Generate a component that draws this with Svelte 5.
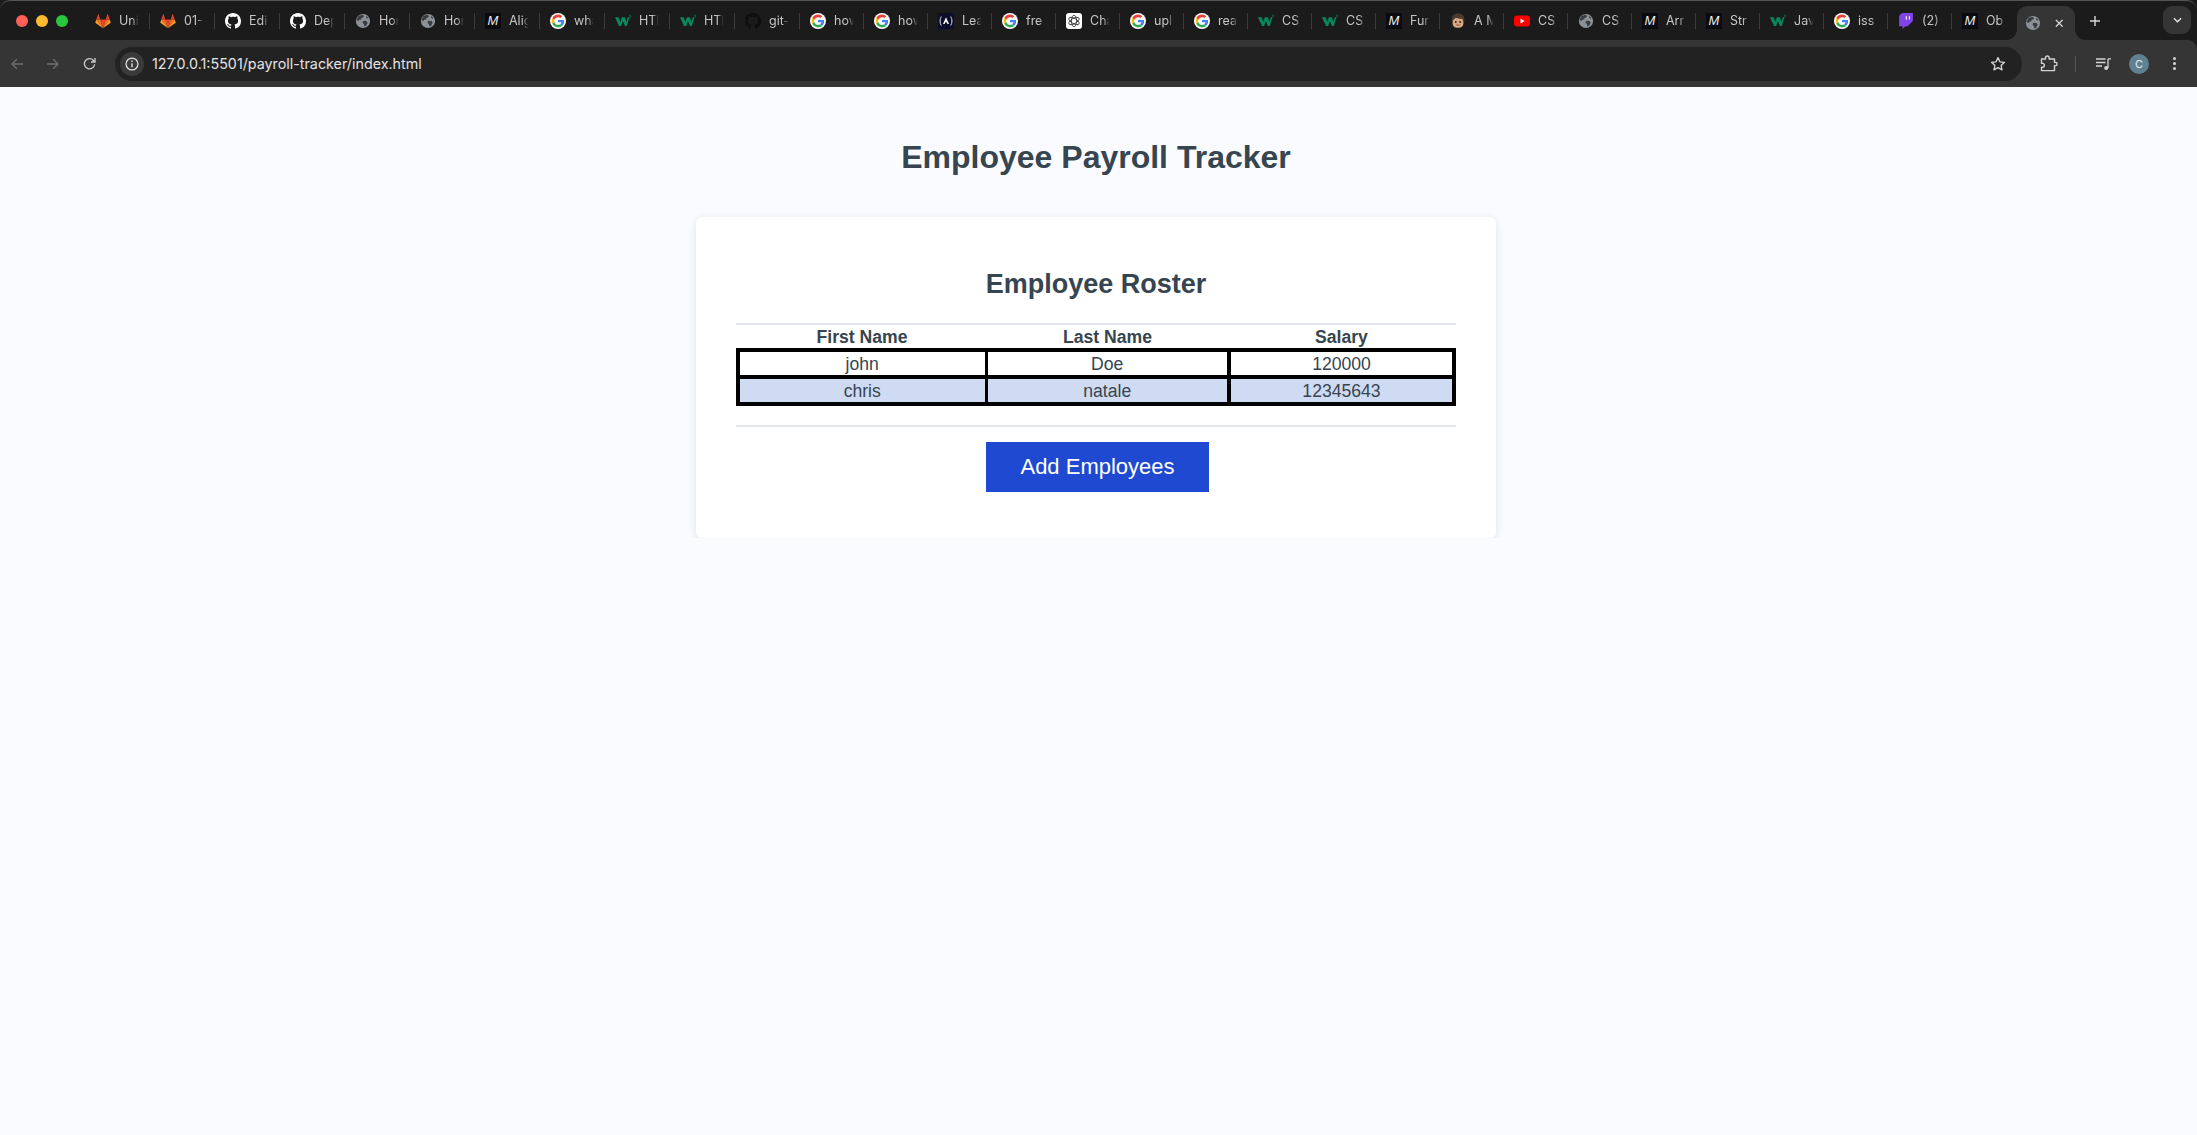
<script lang="ts">
  type Tab = { icon: string; label: string };

  // Titles as far as the narrow tabs show them
  const tabs: Tab[] = [
    { icon: 'gitlab', label: 'Uni' },
    { icon: 'gitlab', label: '01-' },
    { icon: 'github', label: 'Edi' },
    { icon: 'github', label: 'Dep' },
    { icon: 'globe', label: 'Hor' },
    { icon: 'globe', label: 'Hor' },
    { icon: 'mdn', label: 'Alig' },
    { icon: 'google', label: 'wha' },
    { icon: 'w3', label: 'HTI' },
    { icon: 'w3', label: 'HTI' },
    { icon: 'github-dark', label: 'git-' },
    { icon: 'google', label: 'how' },
    { icon: 'google', label: 'how' },
    { icon: 'learn', label: 'Lea' },
    { icon: 'google', label: 'fre' },
    { icon: 'openai', label: 'Cha' },
    { icon: 'google', label: 'upl' },
    { icon: 'google', label: 'rea' },
    { icon: 'w3', label: 'CS' },
    { icon: 'w3', label: 'CS' },
    { icon: 'mdn', label: 'Fur' },
    { icon: 'avatar', label: 'A M' },
    { icon: 'youtube', label: 'CS' },
    { icon: 'globe', label: 'CS' },
    { icon: 'mdn', label: 'Arr' },
    { icon: 'mdn', label: 'Str' },
    { icon: 'w3', label: 'Jav' },
    { icon: 'google', label: 'iss' },
    { icon: 'twitch', label: '(2)' },
    { icon: 'mdn', label: 'Ob' }
  ];

  const employees = [
    { first: 'john', last: 'Doe', salary: 120000 },
    { first: 'chris', last: 'natale', salary: 12345643 }
  ];

  const octocat =
    'M8 0C3.58 0 0 3.58 0 8c0 3.54 2.29 6.53 5.47 7.59.4.07.55-.17.55-.38 0-.19-.01-.82-.01-1.49-2.01.37-2.53-.49-2.69-.94-.09-.23-.48-.94-.82-1.13-.28-.15-.68-.52-.01-.53.63-.01 1.08.58 1.23.82.72 1.21 1.87.87 2.33.66.07-.52.28-.87.51-1.07-1.78-.2-3.64-.89-3.64-3.95 0-.87.31-1.59.82-2.15-.08-.2-.36-1.02.08-2.12 0 0 .67-.21 2.2.82.64-.18 1.32-.27 2-.27.68 0 1.36.09 2 .27 1.53-1.04 2.2-.82 2.2-.82.44 1.1.16 1.92.08 2.12.51.56.82 1.27.82 2.15 0 3.07-1.87 3.75-3.65 3.95.29.25.54.73.54 1.48 0 1.07-.01 1.93-.01 2.2 0 .21.15.46.55.38A8.013 8.013 0 0016 8c0-4.42-3.58-8-8-8z';
</script>

{#snippet favicon(icon: string)}
  {#if icon === 'gitlab'}
    <svg class="fav" viewBox="0 0 16 16">
      <path d="M8 15.2 5.2 6.5h5.6z" fill="#e24329" />
      <path d="M8 15.2 5.2 6.5H1.3z" fill="#fc6d26" />
      <path d="M8 15.2l2.8-8.7h3.9z" fill="#fc6d26" />
      <path d="M1.3 6.5.4 9.2c-.1.3 0 .6.3.8L8 15.2z" fill="#fca326" />
      <path d="M14.7 6.5l.9 2.7c.1.3 0 .6-.3.8L8 15.2z" fill="#fca326" />
      <path d="M1.3 6.5h3.9L3.6 1.2c-.1-.3-.4-.3-.5 0z" fill="#e24329" />
      <path d="M14.7 6.5h-3.9l1.6-5.3c.1-.3.4-.3.5 0z" fill="#e24329" />
    </svg>
  {:else if icon === 'github'}
    <svg class="fav" viewBox="0 0 16 16"><path d={octocat} fill="#fff" /></svg>
  {:else if icon === 'github-dark'}
    <svg class="fav" viewBox="0 0 16 16"><path d={octocat} fill="#0e0e0e" /></svg>
  {:else if icon === 'globe'}
    <svg class="fav" viewBox="-1 -1 18 18">
      <circle cx="8" cy="8" r="8" fill="#8b9197" />
      <path d="M3 2.5 7.2.9l1.9 1.4-.9 1.7-1.9.5-.4 1.9-2.2.3-.9 1.7L.7 6.5zM8.4 7.6l3.6.4 1.2 1.9-1.5 3.1-2 1.3-.8-3-1.5-1.7zM12 2.4l2.3 2.4-1.9.5-1-1.4z" fill="#3a3d40" />
    </svg>
  {:else if icon === 'mdn'}
    <span class="fav mdn">M</span>
  {:else if icon === 'google'}
    <svg class="fav" viewBox="-6 -6 60 60">
      <circle cx="24" cy="24" r="30" fill="#fff" />
      <path fill="#EA4335" d="M24 9.5c3.54 0 6.71 1.22 9.21 3.6l6.85-6.85C35.9 2.38 30.47 0 24 0 14.62 0 6.51 5.38 2.56 13.22l7.98 6.19C12.43 13.72 17.74 9.5 24 9.5z" />
      <path fill="#4285F4" d="M46.98 24.55c0-1.57-.15-3.09-.38-4.55H24v9.02h12.94c-.58 2.96-2.26 5.48-4.78 7.18l7.73 6c4.51-4.18 7.09-10.36 7.09-17.65z" />
      <path fill="#FBBC05" d="M10.53 28.59c-.48-1.45-.76-2.99-.76-4.59s.27-3.14.76-4.59l-7.98-6.19C.92 16.46 0 20.12 0 24c0 3.88.92 7.54 2.56 10.78l7.97-6.19z" />
      <path fill="#34A853" d="M24 48c6.48 0 11.93-2.13 15.89-5.81l-7.73-6c-2.15 1.45-4.92 2.3-8.16 2.3-6.26 0-11.57-4.22-13.47-9.91l-7.98 6.19C6.51 42.62 14.62 48 24 48z" />
    </svg>
  {:else if icon === 'w3'}
    <svg class="fav" viewBox="0 0 16 16">
      <path d="M0 4.2h3.6l1.7 4.9 1.6-4.9h3l1.5 4.9 1.3-4.9h1.6l-2.4 8.8h-1.9L7.9 8l-1.7 5H4z" fill="#06895c" />
      <path d="M14 2.2h1.6l-.7.9c.6.1.8.5.7.9-.1.5-.9.7-1.6.4" fill="none" stroke="#06895c" stroke-width=".6" />
    </svg>
  {:else if icon === 'learn'}
    <svg class="fav learn" viewBox="0 0 16 16">
      <path d="M8 4.2 11 11H9.5L8 8.6 6.5 11H5z" fill="#fff" />
      <path d="M3.3 3.5C1.6 6 1.6 10 3.3 12.5M12.7 3.5c1.7 2.5 1.7 6.5 0 9" fill="none" stroke="#d6d8e6" />
    </svg>
  {:else if icon === 'openai'}
    <svg class="fav openai" viewBox="0 0 16 16">
      <g fill="none" stroke="#2b2b2b" stroke-width=".8">
        <ellipse cx="8" cy="8" rx="2.6" ry="5.8" />
        <ellipse cx="8" cy="8" rx="2.6" ry="5.8" transform="rotate(60 8 8)" />
        <ellipse cx="8" cy="8" rx="2.6" ry="5.8" transform="rotate(120 8 8)" />
      </g>
    </svg>
  {:else if icon === 'avatar'}
    <svg class="fav" viewBox="0 0 16 16">
      <path d="M1.8 8C1 3 4 .5 8 .5S15 3 14.2 8z" fill="#4b3a30" />
      <rect x="2.6" y="4.8" width="10.8" height="10" rx="4.4" fill="#d9a77f" />
      <path d="M2.6 7C4 6.6 5 5.6 5.6 4.4c2 1 5 1.4 7.8 1.2V3H2.6z" fill="#4b3a30" />
      <circle cx="5.8" cy="9" r=".9" fill="#2d211b" />
      <circle cx="10.2" cy="9" r=".9" fill="#2d211b" />
      <rect x="6.2" y="11.6" width="3.6" height="1" rx=".5" fill="#8f4f3d" />
    </svg>
  {:else if icon === 'youtube'}
    <svg class="fav" viewBox="0 0 16 16">
      <rect y="2.5" width="16" height="11" rx="3" fill="#f00" />
      <path d="M6.5 5.6v4.8L10.6 8z" fill="#fff" />
    </svg>
  {:else if icon === 'twitch'}
    <svg class="fav" viewBox="0 0 24 24">
      <path d="M6 0 1.7 4.3v15.4h5.1V24l4.3-4.3h3.4L22.3 12V0z" fill="#8045e6" />
      <path d="M11.6 4.7h1.7v5.2h-1.7zM16.3 4.7H18v5.2h-1.7z" fill="#fff" />
    </svg>
  {/if}
{/snippet}

<div class="browser">
  <header class="tabbar">
    <div class="lights">
      <span class="light red"></span>
      <span class="light amber"></span>
      <span class="light green"></span>
    </div>
    <div class="tabs">
      {#each tabs as tab, i}
        <div class="tab" class:last={i === tabs.length - 1}>
          {@render favicon(tab.icon)}
          <span class="tab-title">{tab.label}</span>
        </div>
      {/each}
      <div class="tab-active">
        {@render favicon('globe')}
        <svg class="tab-close" viewBox="0 0 10 10"><path d="M1 1l8 8M9 1l-8 8" stroke="#e2e2e2" stroke-width="1.5" /></svg>
      </div>
      <svg class="new-tab" viewBox="0 0 10 10"><path d="M5 0v10M0 5h10" stroke="#d8d8d8" stroke-width="1.4" /></svg>
    </div>
    <div class="tab-search">
      <svg viewBox="0 0 10 6"><path d="M1 1l4 4 4-4" fill="none" stroke="#e6e6e6" stroke-width="1.5" /></svg>
    </div>
  </header>

  <div class="toolbar">
    <svg class="nav" viewBox="0 0 12 12"><path d="M12 6H1M5.8 1.2 1 6l4.8 4.8" fill="none" stroke="#6f6f6f" stroke-width="1.3" /></svg>
    <svg class="nav forward" viewBox="0 0 12 12"><path d="M0 6h11M6.2 1.2 11 6l-4.8 4.8" fill="none" stroke="#6f6f6f" stroke-width="1.3" /></svg>
    <svg class="nav reload" viewBox="0 0 13 13"><path d="M11.6 7.2A5.1 5.1 0 1 1 10 3L11.6 4.6" fill="none" stroke="#cfcfcf" stroke-width="1.3" /><path d="M12 1v4h-4" fill="none" stroke="#cfcfcf" stroke-width="1.3" /></svg>

    <div class="omnibox">
      <span class="site-info">
        <svg viewBox="0 0 14 14"><circle cx="7" cy="7" r="5.9" fill="none" stroke="#e0e0e0" stroke-width="1.3" /><path d="M7 6.2v4M7 3.6v1.4" stroke="#e0e0e0" stroke-width="1.4" /></svg>
      </span>
      <span class="url">127.0.0.1:5501/payroll-tracker/index.html</span>
      <svg class="star" viewBox="0 0 16 16"><path d="M8 1.6l1.9 4.2 4.6.5-3.4 3.1.9 4.5L8 11.6l-4 2.3.9-4.5-3.4-3.1 4.6-.5z" fill="none" stroke="#d8d8d8" stroke-width="1.3" stroke-linejoin="round" /></svg>
    </div>

    <svg class="puzzle" viewBox="0 0 18 17"><path d="M1.5 4h4V2.8a1.8 1.8 0 0 1 3.6 0V4h5.4v3.4h1a1.6 1.6 0 0 1 0 3.2h-1v5H1.5v-3.4h1a1.9 1.9 0 0 0 0-3.8h-1z" fill="none" stroke="#d4d4d4" stroke-width="1.4" stroke-linejoin="round" /></svg>
    <span class="tool-sep"></span>
    <svg class="media" viewBox="0 0 15 12"><path d="M0 1h9.5M0 4.5h9.5M0 8h6" stroke="#d4d4d4" stroke-width="1.3" /><path d="M12 1v9M12 .8h3" stroke="#d4d4d4" stroke-width="1.3" /><circle cx="10.2" cy="10" r="2" fill="#d4d4d4" /></svg>
    <span class="profile">C</span>
    <span class="kebab"><i></i><i></i><i></i></span>
  </div>
</div>

<main class="page">
  <h1>Employee Payroll Tracker</h1>
  <section class="card">
    <h2>Employee Roster</h2>
    <hr />
    <table>
      <colgroup>
        <col class="col-first" />
        <col class="col-last" />
        <col />
      </colgroup>
      <thead>
        <tr>
          <th>First Name</th>
          <th>Last Name</th>
          <th>Salary</th>
        </tr>
      </thead>
      <tbody>
        {#each employees as person}
          <tr>
            <td>{person.first}</td>
            <td>{person.last}</td>
            <td>{person.salary}</td>
          </tr>
        {/each}
      </tbody>
    </table>
    <hr class="below" />
    <div class="actions">
      <button type="button">Add Employees</button>
    </div>
  </section>
</main>

<style>
  :global(body) {
    margin: 0;
    background: #f9fbff;
    font-family: 'Liberation Sans', Arial, sans-serif;
  }

  .browser {
    height: 87px;
    background: #1b1b1b;
    font-family: Inter, 'Liberation Sans', sans-serif;
  }

  .tabbar {
    display: flex;
    align-items: stretch;
    height: 39px;
    background: #1b1b1b;
    border-top: 1px solid #555;
    border-radius: 10px 10px 0 0;
  }

  .lights {
    display: flex;
    align-items: center;
    gap: 8px;
    width: 84.5px;
    padding-left: 16px;
    box-sizing: border-box;
    flex: none;
  }

  .light {
    width: 12px;
    height: 12px;
    border-radius: 50%;
  }
  .red { background: #fe5f57; }
  .amber { background: #febb2e; }
  .green { background: #28c840; }

  .tabs {
    display: flex;
    align-items: center;
    flex: 1;
    min-width: 0;
  }

  .tab {
    display: flex;
    align-items: center;
    gap: 8px;
    width: 64px;
    height: 16px;
    padding-left: 10.5px;
    box-sizing: border-box;
    flex: none;
    border-right: 1px solid #3c3c3c;
  }
  /* the first tabs come out a pixel wider */
  .tab:nth-child(-n + 11) { width: 65px; }
  .tab.last { border-right-color: transparent; }

  .fav {
    display: block;
    width: 16px;
    height: 16px;
    flex: none;
  }

  .mdn {
    background: #0b0b0f;
    color: #eee;
    font: italic 400 13px/16px 'Liberation Sans', sans-serif;
    text-align: center;
  }

  .learn { background: #0d0f2a; }
  .openai { background: #fff; border-radius: 3px; }

  .tab-title {
    width: 26px;
    white-space: nowrap;
    font-size: 12.5px;
    line-height: 16px;
    color: #c6c6c6;
    mask-image: linear-gradient(to right, #000 50%, transparent 76%);
  }

  .tab-active {
    position: relative;
    display: flex;
    align-items: center;
    gap: 14px;
    align-self: flex-end;
    width: 58px;
    height: 34px;
    margin-left: 1.5px;
    padding-left: 8px;
    box-sizing: border-box;
    flex: none;
    background: #353535;
    border-radius: 10px 10px 0 0;
  }
  .tab-active::before,
  .tab-active::after {
    content: '';
    position: absolute;
    bottom: 0;
    width: 10px;
    height: 10px;
    background: radial-gradient(circle at 0 0, #1b1b1b 9.5px, #353535 10px);
  }
  .tab-active::before { left: -10px; }
  .tab-active::after {
    right: -10px;
    background: radial-gradient(circle at 100% 0, #1b1b1b 9.5px, #353535 10px);
  }

  .tab-close {
    width: 8.5px;
    height: 8.5px;
  }

  .new-tab {
    width: 10px;
    height: 10px;
    margin-left: 15px;
  }

  .tab-search {
    display: flex;
    align-items: center;
    justify-content: center;
    align-self: flex-start;
    width: 28px;
    height: 28px;
    margin: 5px 6px 0 0;
    background: #353535;
    border-radius: 9px;
    flex: none;
  }
  .tab-search svg {
    width: 9px;
    height: 6px;
  }

  .toolbar {
    display: flex;
    align-items: center;
    height: 47px;
    padding: 0 21px 0 11px;
    box-sizing: border-box;
    background: #353535;
    border-top-right-radius: 9px;
  }

  .nav {
    width: 12px;
    height: 12px;
    flex: none;
  }
  .forward { margin-left: 24px; }
  .reload {
    width: 13px;
    height: 13px;
    margin-left: 24px;
  }

  .omnibox {
    display: flex;
    align-items: center;
    flex: 1;
    height: 34px;
    margin-left: 19px;
    padding: 0 16px 0 5px;
    background: #222;
    border-radius: 17px;
    min-width: 0;
  }

  .site-info {
    display: flex;
    align-items: center;
    justify-content: center;
    width: 24px;
    height: 24px;
    background: #3a3a3a;
    border-radius: 50%;
    flex: none;
  }
  .site-info svg {
    width: 14px;
    height: 14px;
  }

  .url {
    margin-left: 8px;
    font-size: 14.3px;
    color: #e3e3e3;
    white-space: nowrap;
  }

  .star {
    width: 16px;
    height: 16px;
    margin-left: auto;
  }

  .puzzle {
    width: 18px;
    height: 17px;
    margin-left: 18px;
    flex: none;
  }

  .tool-sep {
    width: 1px;
    height: 16px;
    margin-left: 17px;
    background: #585858;
    flex: none;
  }

  .media {
    width: 15px;
    height: 12px;
    margin-left: 20px;
    flex: none;
  }

  .profile {
    width: 20px;
    height: 20px;
    margin-left: 18px;
    border-radius: 50%;
    background: #5f8192;
    color: #e8eef1;
    font-size: 11px;
    line-height: 20px;
    text-align: center;
    flex: none;
  }

  .kebab {
    display: flex;
    flex-direction: column;
    gap: 2px;
    margin-left: 24px;
    flex: none;
  }
  .kebab i {
    width: 3px;
    height: 3px;
    border-radius: 50%;
    background: #d4d4d4;
  }

  .page {
    padding: 0 5px 0 0;
    color: #36454f;
  }

  h1 {
    margin: 0;
    padding-top: 52px;
    font-size: 32px;
    line-height: 37px;
    font-weight: 700;
    text-align: center;
  }

  .card {
    width: 800px;
    margin: 41px auto 0;
    padding: 52px 40px 46px;
    box-sizing: border-box;
    background: #fff;
    border-radius: 6px;
    box-shadow: 0 2px 8px rgba(30, 40, 70, 0.12);
  }

  h2 {
    margin: 0 0 23px;
    font-size: 27px;
    line-height: 31px;
    font-weight: 700;
    text-align: center;
  }

  hr {
    height: 2px;
    margin: 0;
    border: 0;
    background: #e3e7ed;
  }
  hr.below {
    margin-top: 19px;
  }

  table {
    width: 720px;
    border-collapse: collapse;
    table-layout: fixed;
    font-size: 17.6px;
  }

  .col-first { width: 248px; }
  .col-last { width: 243px; }

  th {
    height: 23px;
    padding: 0;
    font-weight: 700;
    line-height: 20px;
  }

  td {
    height: 23px;
    padding: 0;
    border: 4px solid #000;
    line-height: 20px;
    text-align: center;
  }
  td:first-child { border-right-width: 3px; }
  td:nth-child(2) { border-left-width: 3px; }
  tbody tr:nth-child(even) td {
    background: #cfdbf3;
  }

  .actions {
    display: flex;
    justify-content: center;
    margin-top: 15px;
    padding-left: 3px;
  }

  button {
    width: 223px;
    height: 50px;
    padding: 0;
    border: 0;
    background: #1e49d0;
    color: #fff;
    font-family: inherit;
    font-size: 22px;
  }
</style>
